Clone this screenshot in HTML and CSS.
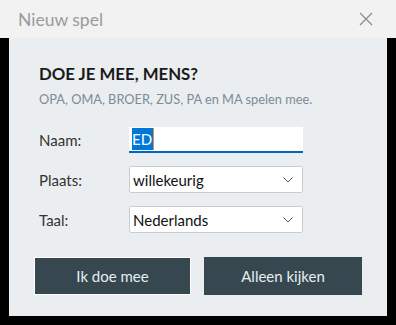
FILE: index.html
```html
<!DOCTYPE html>
<html>
<head>
    <link rel="stylesheet" href="styles.css">
</head>
<body>
    <div class="titlebar">
        <span class="title">Nieuw spel</span>
        <svg class="close" width="14" height="14" viewBox="0 0 14 14">
            <path d="M1 1 L13 13 M13 1 L1 13" stroke="#8a8a8a" stroke-width="1.2" fill="none"/>
        </svg>
    </div>
    <div class="dialog">
        <h2>DOE JE MEE, MENS?</h2>
        <p class="players">OPA, OMA, BROER, ZUS, PA en MA spelen mee.</p>

        <div class="form">
            <label>Naam:</label>
            <div class="name-field"><span class="selected">ED</span></div>

            <label>Plaats:</label>
            <div class="select">willekeurig
                <svg class="chevron" width="10" height="6" viewBox="0 0 10 6"><path d="M0.5 0.5 L5 5 L9.5 0.5" stroke="#555" stroke-width="1" fill="none"/></svg>
            </div>

            <label>Taal:</label>
            <div class="select">Nederlands
                <svg class="chevron" width="10" height="6" viewBox="0 0 10 6"><path d="M0.5 0.5 L5 5 L9.5 0.5" stroke="#555" stroke-width="1" fill="none"/></svg>
            </div>
        </div>

        <div class="button-container">
            <button class="focused">Ik doe mee</button>
            <button>Alleen kijken</button>
        </div>
    </div>
</body>
</html>
```

FILE: styles.css
```css
body {
    margin: 0;
    background-color: #000;
    font-family: Lato, "Noto Sans", sans-serif;
}
.titlebar {
    height: 38px;
    background-color: #f2f2f2;
    display: flex;
    align-items: center;
    justify-content: space-between;
    padding: 0 23px 0 18px;
}
.title {
    font-size: 17.5px;
    color: #9a9a9a;
}
.dialog {
    margin: 0 9px;
    height: 278px;
    background-color: #eaeef1;
    padding: 24px 0 0 30px;
    box-sizing: border-box;
}
h2 {
    margin: 0;
    font-size: 16.8px;
    font-weight: bold;
    color: #1a1a1a;
    line-height: 24px;
}
.players {
    margin: 5px 0 0;
    font-size: 12.8px;
    color: #7d8b96;
    line-height: 16px;
}
.form {
    display: grid;
    grid-template-columns: 90px 174px;
    row-gap: 13px;
    align-items: center;
    margin-top: 20px;
}
label {
    font-size: 15px;
    color: #333;
}
.name-field {
    height: 24px;
    background-color: #fff;
    border-bottom: 2px solid #0067c0;
    display: flex;
    align-items: center;
    padding-left: 3px;
}
.selected {
    background-color: #0078d7;
    color: #fff;
    font-size: 15px;
    line-height: 22px;
    padding-right: 1px;
    border-right: 1px solid #e08b3c;
}
.select {
    height: 27px;
    box-sizing: border-box;
    background-color: #fff;
    border: 1px solid #ccc;
    border-radius: 2px;
    display: flex;
    align-items: center;
    justify-content: space-between;
    padding: 0 9px 0 3px;
    font-size: 15px;
    color: #111;
}
.button-container {
    display: flex;
    gap: 13px;
    margin: 24px 0 0 -5px;
}
button {
    width: 158px;
    height: 38px;
    background-color: #37474f;
    color: #e6eef2;
    border: none;
    font-family: Lato, "Noto Sans", sans-serif;
    font-size: 15px;
}
button.focused {
    width: 157px;
    border: 1px solid #fff;
}
```
